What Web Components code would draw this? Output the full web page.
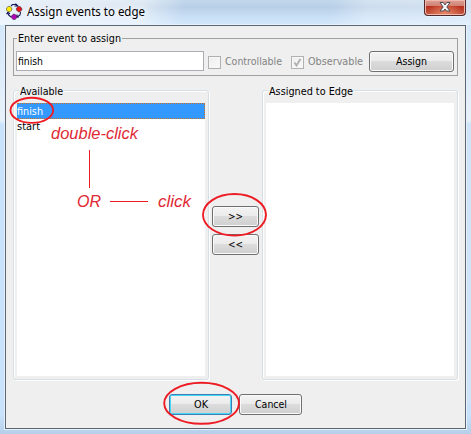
<!DOCTYPE html>
<html lang="en"><head><meta charset="utf-8"><title>Assign events to edge</title>
<style>
html,body{margin:0;width:471px;height:434px;overflow:hidden}
body{font:11px/16px "DejaVu Sans Condensed","DejaVu Sans",sans-serif;color:#000}
</style></head><body>
<event-dialog></event-dialog>
<script>
const define=(name,html,init)=>customElements.define(name,class extends HTMLElement{
  connectedCallback(){
    if(this.shadowRoot)return;
    const t=document.createElement('template');t.innerHTML=html;
    this.attachShadow({mode:'open'}).append(t.content.cloneNode(true));
    if(init)init(this);
  }
});

/* A single-line label scaled horizontally to the width given in "w". */
define('fit-label',`<style>:host{display:inline-block;white-space:nowrap}span{display:inline-block;transform-origin:0 50%}</style><span><slot></slot></span>`,el=>{
  const s=el.shadowRoot.querySelector('span'),w=+el.getAttribute('w');
  const fit=()=>{const n=s.offsetWidth;if(!n)return;el.style.width=w+'px';s.style.transform='scaleX('+(w/s.getBoundingClientRect().width)+')'};
  fit();
});

define('push-button',`<style>
:host{display:flex;box-sizing:border-box;height:21px;border:1px solid #707070;border-radius:3px;align-items:center;justify-content:center;
background:linear-gradient(#f3f3f3,#ebebeb 48%,#dcdcdc 50%,#cfcfcf);box-shadow:inset 0 0 0 1px #fafafa}
:host([primary]){border-color:#3c7fb1;box-shadow:inset 0 0 0 1px #47d5fc}
</style><slot></slot>`);

define('check-option',`<style>
:host{display:flex;align-items:center;color:#838383;gap:4px;height:16px}
i{box-sizing:border-box;width:13px;height:13px;border:1px solid #b1b1b1;background:linear-gradient(135deg,#eee,#fafafa);box-shadow:inset 0 0 0 1px #f7f7f7}
svg{display:none}:host([checked]) svg{display:block}
</style><i><svg width="11" height="11" viewBox="0 0 11 11"><path d="M2.5 5.5 4.5 8.5 8.5 2" fill="none" stroke="#b3b3b3" stroke-width="2"/></svg></i><slot></slot>`);

define('list-group',`<style>
:host{display:block;box-sizing:border-box;width:196px;height:296px;padding:6px 0 0}
.frame{box-sizing:border-box;height:290px;border:1px solid #d5dfe5;border-radius:3px;box-shadow:1px 1px #fff,inset 1px 1px #fff;padding:0 3px 3px}
.title{display:flex;height:12px}
.title slot{display:block;background:#efefef;height:16px;margin:-7px 0 0 2px;padding:0 1px}
.list{height:273px;background:#fff}
</style><div class="frame"><div class="title"><slot name="title"></slot></div><div class="list"><slot></slot></div></div>`);

define('list-row',`<style>
:host{display:block;box-sizing:border-box;height:16px;line-height:16px;padding:0;white-space:nowrap}
:host([selected]){background:#39f;color:#fff;border:1px dotted #c8702e;border-left:0;line-height:15px}
</style><slot></slot>`);

define('title-bar',`<style>
:host{display:flex;height:25px;box-sizing:border-box;padding:0 5px 0 6px;font-family:"Noto Sans","Open Sans",sans-serif;font-size:12px}
.icon{margin-top:2px;width:17px;height:19px;flex:none}
.text{margin:4px 0 0 4px;flex:1;text-shadow:0 0 6px #fff,0 0 8px #fff}
.close{box-sizing:border-box;width:42px;height:16px;border:1px solid #54282b;border-top:0;border-radius:0 0 4px 4px;background:radial-gradient(ellipse at 50% 100%,#e88a67,transparent 65%),linear-gradient(#dea198,#cf8275 38%,#b9301f 42%,#c1553f);box-shadow:inset 0 0 0 1px #efb9ad,0 1px #e7f2fb}
.close svg{display:block;margin:0 auto}
</style>
<svg class="icon" viewBox="0 0 17 19">
<g fill="none" stroke="#15155a" stroke-width="1.1"><path d="M5 4 6.5 2.5H10L12 4M1.5 10 2.5 13 5 15M14.5 10 14 13 11 15"/><path d="M9.5 1.5 11.5 4H8.5M.5 12 2 10.5 4 12M11 12.5V15H13"/></g>
<g stroke="#222" stroke-width=".5"><path fill="#ffec00" d="M2.2 4.5H4L5.8 6.2V8L4 9.8H2.2L.4 8V6.2z"/><path fill="#e9141b" d="M12.2 4.5H14L15.8 6.2V8L14 9.8H12.2L10.4 8V6.2z"/><path fill="#b000b8" d="M7.2 12.2H9L10.8 14V15.8L9 17.5H7.2L5.4 15.8V14z"/></g></svg>
<div class="text"><slot></slot></div>
<div class="close"><svg width="14" height="14" viewBox="0 0 14 14"><path d="M2 2.5H5.3L7 5 8.7 2.5H12L8.8 7 12 11H8.6L7 9 5.4 11H2L5.2 7z" fill="#f8f8f8" stroke="#4d4b58" stroke-width="1"/></svg></div>`);

define('event-notes',`<style>
:host{position:absolute;inset:0;color:#df2935;font:italic 16px/18px "Liberation Sans",Arial,sans-serif}
svg{position:absolute;left:0;top:0}fit-label{position:absolute}
.a{left:51px;top:125px}.b{left:77px;top:193px}.c{left:158px;top:193px}
</style>
<svg width="471" height="434" viewBox="0 0 471 434"><g fill="none" stroke="#ed1c24" stroke-width="1.9"><ellipse cx="31.8" cy="110.3" rx="21.3" ry="12.6"/><ellipse cx="234.5" cy="214.8" rx="31.5" ry="20.8"/><ellipse cx="201.6" cy="403.3" rx="37.4" ry="20.5"/></g><path fill="#ed1c24" d="M89 150h1v38h-1zM110 201h38v1h-38z"/></svg>
<fit-label class="a" w="87">double-click</fit-label><fit-label class="b" w="24">OR</fit-label><fit-label class="c" w="33">click</fit-label>`);

define('event-dialog',`<style>
:host{position:relative;display:block;width:471px;height:434px;box-sizing:border-box;overflow:hidden;
background:linear-gradient(90deg,#c9e2fb 0,#c9e2fb 5px,transparent 5px,transparent 466px,#cfe4f8 466px) 0 124px/100% 280px no-repeat,
linear-gradient(100deg,rgba(255,255,255,.65) 0,rgba(255,255,255,.5) 30%,transparent 39%,transparent 70%,rgba(255,255,255,.3) 78%,rgba(255,255,255,.35)) 0 0/100% 25px no-repeat,
linear-gradient(#c3d8ec,#b9cfe7 7px,#c9dff5 17px,#d4e8fb 25px,#e8f1fa 120px,#c9e2fb 125px,#c9e2fb 415px,#b5cfea)}
.panel{box-sizing:border-box;width:461px;height:404px;margin-left:5px;border:1px solid #5c6670;background:#efefef;padding:5px 7px 0;box-shadow:0 0 0 1px #e5f2fd}
.entry{height:45px;display:flex;flex-direction:column}
.legend{height:15px;margin-left:4px;width:105px;background:#efefef;padding-left:1px;box-sizing:border-box;position:relative;z-index:1}
.box{box-sizing:border-box;height:38px;margin-top:-8px;border:1px solid #a0a0a0;padding:12px 3px 0 2px;display:flex;width:445px}
.input{box-sizing:border-box;width:188px;height:20px;border:1px solid #abadb3;background:#fff;padding:1px 1px;line-height:17px}
.c1{margin:3px 0 0 4px}.c2{margin:3px 0 0 9px}
.assign{width:85px;margin-left:auto}
.lists{display:flex;margin-top:8px;width:445px;height:297px}
.move{flex:1;display:flex;flex-direction:column;gap:7px;padding:122px 3px 0}
.actions{display:flex;gap:7px;margin:13px 0 0 156px}.actions push-button{width:63px}
</style>
<title-bar><fit-label w="118">Assign events to edge</fit-label></title-bar>
<div class="panel">
<div class="entry"><div class="legend"><fit-label w="103">Enter event to assign</fit-label></div>
<div class="box"><div class="input"><fit-label w="25">finish</fit-label></div><check-option class="c1"><fit-label w="57">Controllable</fit-label></check-option><check-option class="c2" checked><fit-label w="55">Observable</fit-label></check-option><push-button class="assign"><fit-label w="31">Assign</fit-label></push-button></div></div>
<div class="lists"><list-group><fit-label slot="title" w="43">Available</fit-label><list-row selected><fit-label w="26">finish</fit-label></list-row><list-row><fit-label w="23">start</fit-label></list-row></list-group>
<div class="move"><push-button><fit-label w="15">&gt;&gt;</fit-label></push-button><push-button><fit-label w="15">&lt;&lt;</fit-label></push-button></div>
<list-group><fit-label slot="title" w="84">Assigned to Edge</fit-label></list-group></div>
<div class="actions"><push-button primary><fit-label w="14">OK</fit-label></push-button><push-button><fit-label w="32">Cancel</fit-label></push-button></div>
</div><event-notes></event-notes>`);
</script></body></html>
